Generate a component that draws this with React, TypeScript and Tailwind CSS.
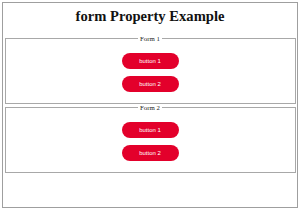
import React from 'react';

const serif = "font-['Liberation_Serif','Times_New_Roman',serif]";

const RedButton: React.FC<{ label: string }> = ({ label }) => (
  <button className="w-[57px] h-[16px] rounded-full bg-[#e3002b] text-white text-[6px] leading-none font-['Liberation_Sans',Arial,sans-serif]">
    {label}
  </button>
);

const FormBox: React.FC<{ title: string; className?: string }> = ({ title, className = '' }) => (
  <fieldset className={`border border-[#a8a8a8] ${className}`}>
    <legend className={`mx-auto px-[2px] text-[6.8px] leading-[8px] text-[#222] ${serif}`}>{title}</legend>
    <div className="flex flex-col items-center gap-[7px] pt-[10px] pb-[11px]">
      <RedButton label="button 1" />
      <RedButton label="button 2" />
    </div>
  </fieldset>
);

export default function App() {
  return (
    <div className="w-[300px] h-[210px] bg-white p-[2px]">
      <div className="h-full border-[1.5px] border-[#9f9f9f] px-[1.5px]">
        <h1 className={`mt-[6px] text-center text-[14.6px] leading-[15px] font-bold text-[#111] ${serif}`}>
          form Property Example
        </h1>
        <FormBox title="Form 1" className="mt-[10.5px]" />
        <FormBox title="Form 2" />
      </div>
    </div>
  );
}
